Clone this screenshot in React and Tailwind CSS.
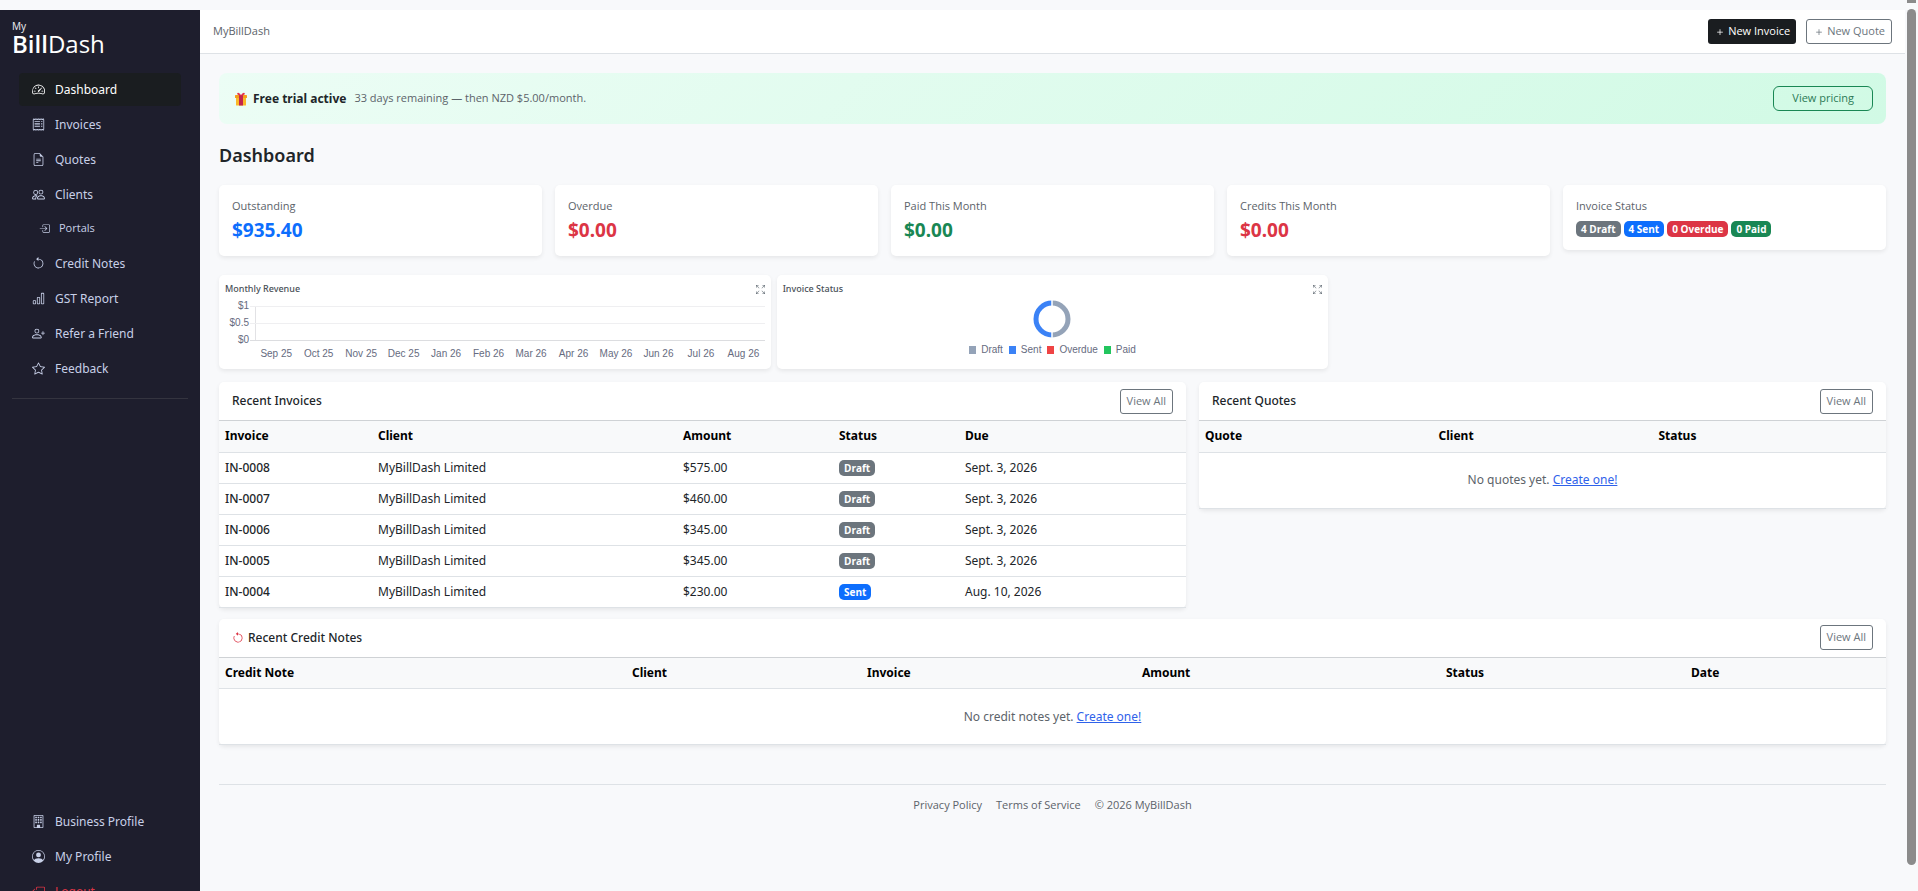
import {
  BsSpeedometer2,
  BsReceipt,
  BsFileEarmarkText,
  BsPeople,
  BsBoxArrowInRight,
  BsArrowCounterclockwise,
  BsBarChart,
  BsPersonPlus,
  BsStar,
  BsBuilding,
  BsPersonCircle,
  BsBoxArrowLeft,
  BsArrowsFullscreen,
  BsPlus,
} from 'react-icons/bs';
import clsx from 'clsx';

const NAV_ITEMS = [
  { label: 'Dashboard', icon: BsSpeedometer2, active: true },
  { label: 'Invoices', icon: BsReceipt },
  { label: 'Quotes', icon: BsFileEarmarkText },
  { label: 'Clients', icon: BsPeople },
  { label: 'Portals', icon: BsBoxArrowInRight, sub: true },
  { label: 'Credit Notes', icon: BsArrowCounterclockwise },
  { label: 'GST Report', icon: BsBarChart },
  { label: 'Refer a Friend', icon: BsPersonPlus },
  { label: 'Feedback', icon: BsStar },
];

const ACCOUNT_ITEMS = [
  { label: 'Business Profile', icon: BsBuilding },
  { label: 'My Profile', icon: BsPersonCircle },
  { label: 'Logout', icon: BsBoxArrowLeft, danger: true },
];

const STATS = [
  { label: 'Outstanding', value: '$935.40', color: 'text-[#0d6efd]' },
  { label: 'Overdue', value: '$0.00', color: 'text-[#dc3545]' },
  { label: 'Paid This Month', value: '$0.00', color: 'text-[#198754]' },
  { label: 'Credits This Month', value: '$0.00', color: 'text-[#dc3545]' },
];

const BADGE_COLORS = {
  Draft: 'bg-[#6c757d]',
  Sent: 'bg-[#0d6efd]',
  Overdue: 'bg-[#dc3545]',
  Paid: 'bg-[#198754]',
};

const STATUS_COUNTS = [
  { status: 'Draft', count: 4 },
  { status: 'Sent', count: 4 },
  { status: 'Overdue', count: 0 },
  { status: 'Paid', count: 0 },
];

const MONTHS = ['Sep 25', 'Oct 25', 'Nov 25', 'Dec 25', 'Jan 26', 'Feb 26', 'Mar 26', 'Apr 26', 'May 26', 'Jun 26', 'Jul 26', 'Aug 26'];

const LEGEND = [
  { label: 'Draft', color: 'bg-[#94a3b8]' },
  { label: 'Sent', color: 'bg-[#3b82f6]' },
  { label: 'Overdue', color: 'bg-[#ef4444]' },
  { label: 'Paid', color: 'bg-[#22c55e]' },
];

const INVOICES = [
  { id: 'IN-0008', client: 'MyBillDash Limited', amount: '$575.00', status: 'Draft', due: 'Sept. 3, 2026' },
  { id: 'IN-0007', client: 'MyBillDash Limited', amount: '$460.00', status: 'Draft', due: 'Sept. 3, 2026' },
  { id: 'IN-0006', client: 'MyBillDash Limited', amount: '$345.00', status: 'Draft', due: 'Sept. 3, 2026' },
  { id: 'IN-0005', client: 'MyBillDash Limited', amount: '$345.00', status: 'Draft', due: 'Sept. 3, 2026' },
  { id: 'IN-0004', client: 'MyBillDash Limited', amount: '$230.00', status: 'Sent', due: 'Aug. 10, 2026' },
];

const INVOICE_COLS = [
  { label: 'Invoice', width: 'w-[153px]' },
  { label: 'Client', width: 'w-[305px]' },
  { label: 'Amount', width: 'w-[156px]' },
  { label: 'Status', width: 'w-[126px]' },
  { label: 'Due', width: 'w-auto' },
];

const QUOTE_COLS = [
  { label: 'Quote', width: 'w-[34%]' },
  { label: 'Client', width: 'w-[32%]' },
  { label: 'Status', width: 'w-[34%]' },
];

const CREDIT_COLS = [
  { label: 'Credit Note', width: 'w-[407px]' },
  { label: 'Client', width: 'w-[235px]' },
  { label: 'Invoice', width: 'w-[275px]' },
  { label: 'Amount', width: 'w-[304px]' },
  { label: 'Status', width: 'w-[245px]' },
  { label: 'Date', width: 'w-auto' },
];

function NavItem({ label, icon: Icon, active, sub, danger }) {
  return (
    <a
      href="#"
      className={clsx(
        'flex items-center rounded-sm',
        sub ? "mb-px h-[31px] gap-[9px] pl-5 font-['Open_Sans'] text-[11px]" : 'h-[33px] gap-2.5 pl-[13px] text-xs',
        active && 'bg-[#1a1d20] text-white',
        danger && 'text-[#dc3545]',
        !active && !danger && 'text-[#c8d0e8]'
      )}
    >
      <Icon className={sub ? 'size-[11px]' : 'size-[13px]'} />
      {label}
    </a>
  );
}

function Sidebar() {
  return (
    <aside className="flex w-[200px] shrink-0 flex-col bg-[#1e1e2d] px-3">
      <div className="pt-[11px] text-white">
        <p className="text-[10px] leading-[11px] text-gray-200">My</p>
        <p className="font-['Open_Sans'] text-2xl leading-[23px]">
          <span className="font-semibold">Bill</span>Dash
        </p>
      </div>
      <nav className="mt-[18px] flex flex-col gap-0.5 px-[7px]">
        {NAV_ITEMS.map((item) => (
          <NavItem key={item.label} {...item} />
        ))}
      </nav>
      <hr className="mt-[13px] border-[#34343f]" />
      <nav className="mt-auto flex flex-col gap-0.5 px-[7px]">
        {ACCOUNT_ITEMS.map((item) => (
          <NavItem key={item.label} {...item} />
        ))}
      </nav>
    </aside>
  );
}

function GiftIcon() {
  return (
    <svg viewBox="0 0 12 14" className="h-[14px] w-3">
      <rect x="1" y="5" width="10" height="8.5" rx="0.6" fill="#fbb829" />
      <rect x="0" y="3" width="12" height="3" rx="0.6" fill="#f59e1b" />
      <rect x="4" y="3" width="4" height="10.5" fill="#c2264e" />
      <path d="M6 3.4C4.6 3.4 2 3 2.2 1.4 2.4 0 5 .6 6 3.4 7 .6 9.6 0 9.8 1.4 10 3 7.4 3.4 6 3.4Z" fill="#e5334b" />
    </svg>
  );
}

function Card({ className, children }) {
  return <section className={clsx('rounded-[5px] bg-white shadow-[0_2px_4px_rgba(0,0,0,0.075)]', className)}>{children}</section>;
}

function Badge({ status, children }) {
  return (
    <span className={clsx("inline-block rounded-[5px] px-[5px] font-['Open_Sans'] text-[10px] leading-4 font-bold text-white", BADGE_COLORS[status])}>
      {children}
    </span>
  );
}

function CardHeader({ title, icon }) {
  return (
    <div className="flex h-[39px] items-center justify-between border-b border-[#cfd2d5] px-[13px]">
      <h2 className="flex items-center gap-1 text-xs font-medium">
        {icon}
        {title}
      </h2>
      <a
        href="#"
        className="flex h-[25px] items-center rounded-[3px] border border-[#6c757d] px-1.5 font-['Open_Sans'] text-[11px] text-[#6c757d]"
      >
        View All
      </a>
    </div>
  );
}

function TableHead({ cols }) {
  return (
    <thead>
      <tr className="h-[31px] border-b border-[#dee2e6] bg-[#f8f9fa] text-left text-black">
        {cols.map((col) => (
          <th key={col.label} className={clsx('px-1.5 font-bold', col.width)}>
            {col.label}
          </th>
        ))}
      </tr>
    </thead>
  );
}

function EmptyTable({ cols, message }) {
  return (
    <table className="w-full table-fixed text-xs">
      <TableHead cols={cols} />
      <tbody>
        <tr className="h-14 border-b border-[#dee2e6]">
          <td colSpan={cols.length} className="text-center text-[#5c636a]">
            {message}{' '}
            <a href="#" className="text-[#2f62ea] underline">
              Create one!
            </a>
          </td>
        </tr>
      </tbody>
    </table>
  );
}

function ChartTitle({ children }) {
  return (
    <div className="flex h-3 items-center justify-between">
      <h2 className="text-[9px] font-medium text-[#495057]">{children}</h2>
      <button type="button" aria-label="Expand chart" className="text-[#6c757d]">
        <BsArrowsFullscreen className="size-[9px]" />
      </button>
    </div>
  );
}

function RevenueChart() {
  return (
    <Card className="px-1.5 py-2">
      <ChartTitle>Monthly Revenue</ChartTitle>
      <div className="mt-[5px] font-['Liberation_Sans'] text-[10px] text-[#666b80]">
        <div className="flex gap-1.5">
          <div className="flex w-6 flex-col gap-[5px] text-right leading-3">
            <span>$1</span>
            <span>$0.5</span>
            <span>$0</span>
          </div>
          {/* gridlines stick out to the left of the axis as ticks */}
          <div className="mt-1.5 flex h-[35px] flex-1 flex-col justify-between border-l border-[#e2e2e5]">
            <div className="-ml-1.5 h-px bg-[#efeff1]" />
            <div className="-ml-1.5 h-px bg-[#efeff1]" />
            <div className="-ml-1.5 h-px bg-[#dcdde0]" />
          </div>
        </div>
        <div className="mt-px ml-[30px] grid grid-cols-12 text-center leading-[14px]">
          {MONTHS.map((month) => (
            <span key={month} className="whitespace-nowrap">{month}</span>
          ))}
        </div>
      </div>
    </Card>
  );
}

function StatusChart() {
  return (
    <Card className="px-1.5 py-2">
      <ChartTitle>Invoice Status</ChartTitle>
      <svg viewBox="0 0 38 38" className="mx-auto mt-[5px] size-[38px]">
        <path d="M19 3A16 16 0 0 1 19 35" fill="none" stroke="#94a3b8" strokeWidth="5" />
        <path d="M19 35A16 16 0 0 1 19 3" fill="none" stroke="#3b82f6" strokeWidth="5" />
        <path d="M19 0V38" stroke="#fff" strokeWidth="1.5" />
      </svg>
      <ul className="mt-1.5 flex justify-center gap-1.5 font-['Liberation_Sans'] text-[10px] leading-3 text-[#666b80]">
        {LEGEND.map((item) => (
          <li key={item.label} className="flex items-center gap-[5px]">
            <span className={clsx('h-2 w-[7px]', item.color)} />
            {item.label}
          </li>
        ))}
      </ul>
    </Card>
  );
}

function Topbar() {
  return (
    <header className="flex h-11 items-center justify-between border-b border-[#dee2e6] bg-white px-[13px] font-['Open_Sans'] text-[11px]">
      <span className="text-[#5c636a]">MyBillDash</span>
      <div className="flex gap-2.5">
        <a href="#" className="flex h-[25px] items-center gap-0.5 rounded-[3px] bg-[#1a1d20] px-1.5 font-medium text-white">
          <BsPlus className="size-3" />
          New Invoice
        </a>
        <a href="#" className="flex h-[25px] items-center gap-0.5 rounded-[3px] border border-[#6c757d] px-1.5 text-[#6c757d]">
          <BsPlus className="size-3" />
          New Quote
        </a>
      </div>
    </header>
  );
}

function App() {
  return (
    <div className="flex h-screen overflow-hidden bg-[#f8f9fb] font-['Noto_Sans',sans-serif] text-[#212529]">
      <div className="mt-2.5 flex h-[calc(100vh+7px)] min-w-0 flex-1">
        <Sidebar />
        <div className="min-w-0 flex-1">
          <Topbar />
          <main className="px-[19px] pt-[19px]">
            <div className="flex h-[51px] items-center rounded-lg bg-linear-135 from-[#ecfdf5] to-[#d1fae5] pr-[13px] pl-4">
              <GiftIcon />
              <strong className="ml-1.5 text-xs">Free trial active</strong>
              <span className="ml-2 font-['Open_Sans'] text-[11px] text-[#5c636a]">33 days remaining — then NZD $5.00/month.</span>
              <a
                href="#"
                className="ml-auto flex h-[25px] items-center rounded-md border border-[#198754] px-[18px] font-['Open_Sans'] text-[11px] text-[#2c7a56]"
              >
                View pricing
              </a>
            </div>

            <h1 className="mt-[18px] text-lg leading-[26px] font-semibold">Dashboard</h1>

            <div className="mt-[17px] grid grid-cols-5 items-start gap-[13px]">
              {STATS.map((stat) => (
                <Card key={stat.label} className="p-[13px]">
                  <p className="font-['Open_Sans'] text-[11px] leading-4 text-[#5c636a]">{stat.label}</p>
                  <p className={clsx('mt-[3px] text-[19px] leading-[26px] font-bold', stat.color)}>{stat.value}</p>
                </Card>
              ))}
              <Card className="p-[13px]">
                <p className="font-['Open_Sans'] text-[11px] leading-4 text-[#5c636a]">Invoice Status</p>
                <div className="mt-[7px] flex gap-[3px]">
                  {STATUS_COUNTS.map(({ status, count }) => (
                    <Badge key={status} status={status}>
                      {count} {status}
                    </Badge>
                  ))}
                </div>
              </Card>
            </div>

            <div className="mt-[19px] grid grid-cols-3 gap-1.5">
              <RevenueChart />
              <StatusChart />
            </div>

            <div className="mt-[13px] grid grid-cols-12 items-start gap-[13px]">
              <Card className="col-span-7">
                <CardHeader title="Recent Invoices" />
                <table className="w-full table-fixed text-xs">
                  <TableHead cols={INVOICE_COLS} />
                  <tbody>
                    {INVOICES.map((inv) => (
                      <tr key={inv.id} className="h-[31px] border-b border-[#dee2e6]">
                        <td className="px-1.5 font-medium">{inv.id}</td>
                        <td className="px-1.5">{inv.client}</td>
                        <td className="px-1.5">{inv.amount}</td>
                        <td className="px-1.5">
                          <Badge status={inv.status}>{inv.status}</Badge>
                        </td>
                        <td className="px-1.5">{inv.due}</td>
                      </tr>
                    ))}
                  </tbody>
                </table>
              </Card>
              <Card className="col-span-5">
                <CardHeader title="Recent Quotes" />
                <EmptyTable cols={QUOTE_COLS} message="No quotes yet." />
              </Card>
            </div>

            <Card className="mt-[11px]">
              <CardHeader title="Recent Credit Notes" icon={<BsArrowCounterclockwise className="size-3 text-[#dc3545]" />} />
              <EmptyTable cols={CREDIT_COLS} message="No credit notes yet." />
            </Card>

            <footer className="mt-[39px] flex justify-center gap-3.5 border-t border-[#dee2e6] pt-3 font-['Open_Sans'] text-[11px] leading-4 text-[#5c636a]">
              <a href="#">Privacy Policy</a>
              <a href="#">Terms of Service</a>
              <span>© 2026 MyBillDash</span>
            </footer>
          </main>
        </div>
      </div>

      {/* scrollbar */}
      <div className="flex w-[13px] shrink-0 flex-col gap-1.5 px-0.5">
        <div className="h-[3px] bg-[#8b8b8b]" />
        <div className="mb-[26px] flex-1 rounded-full bg-[#8b8b8b]" />
      </div>
    </div>
  );
}

export default App;
